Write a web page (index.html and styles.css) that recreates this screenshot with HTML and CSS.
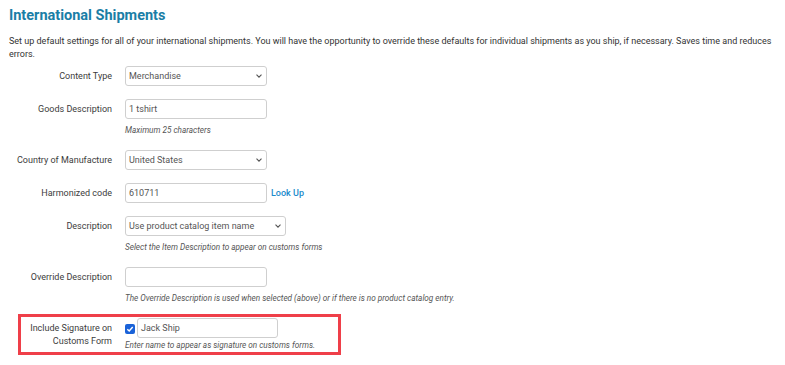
FILE: index.html
```html
<!DOCTYPE html>
<html lang="en">
<head>
<meta charset="utf-8">
<title>International Shipments</title>
<link rel="stylesheet" href="styles.css">
</head>
<body>
<div class="page">
  <h1 class="title">International Shipments</h1>
  <p class="intro">Set up default settings for all of your international shipments. You will have the opportunity to override these defaults for individual shipments as you ship, if necessary. Saves time and reduces errors.</p>

  <div class="form-row">
    <label class="label">Content Type</label>
    <div class="control">
      <div class="select w142"><span>Merchandise</span><svg class="chev" width="6" height="4" viewBox="0 0 6 4"><path d="M0.5 0.6 L3 3.1 L5.5 0.6" fill="none" stroke="#555" stroke-width="1.1"/></svg></div>
    </div>
  </div>

  <div class="form-row">
    <label class="label">Goods Description</label>
    <div class="control">
      <div class="input w142">1 tshirt</div>
      <div class="hint">Maximum 25 characters</div>
    </div>
  </div>

  <div class="form-row">
    <label class="label">Country of Manufacture</label>
    <div class="control">
      <div class="select w142"><span>United States</span><svg class="chev" width="6" height="4" viewBox="0 0 6 4"><path d="M0.5 0.6 L3 3.1 L5.5 0.6" fill="none" stroke="#555" stroke-width="1.1"/></svg></div>
    </div>
  </div>

  <div class="form-row">
    <label class="label">Harmonized code</label>
    <div class="control inline">
      <div class="input w142">610711</div>
      <a class="link" href="#">Look Up</a>
    </div>
  </div>

  <div class="form-row">
    <label class="label">Description</label>
    <div class="control">
      <div class="select w161"><span>Use product catalog item name</span><svg class="chev" width="6" height="4" viewBox="0 0 6 4"><path d="M0.5 0.6 L3 3.1 L5.5 0.6" fill="none" stroke="#555" stroke-width="1.1"/></svg></div>
      <div class="hint">Select the Item Description to appear on customs forms</div>
    </div>
  </div>

  <div class="form-row">
    <label class="label">Override Description</label>
    <div class="control">
      <div class="input w142"></div>
      <div class="hint">The Override Description is used when selected (above) or if there is no product catalog entry.</div>
    </div>
  </div>

  <div class="form-row highlight">
    <label class="label">Include Signature on Customs Form</label>
    <div class="control">
      <div class="inline">
        <span class="checkbox"><svg width="8" height="8" viewBox="0 0 8 8"><path d="M1.3 4.2 L3.2 6 L6.7 2" fill="none" stroke="#fff" stroke-width="1.4"/></svg></span>
        <div class="input w141">Jack Ship</div>
      </div>
      <div class="hint tight">Enter name to appear as signature on customs forms.</div>
    </div>
  </div>
</div>
</body>
</html>
```

FILE: styles.css
```css
html, body {
  margin: 0;
  padding: 0;
  background: #fff;
}

body {
  font-family: Roboto, "Liberation Sans", Arial, sans-serif;
  color: #333;
}

.page {
  padding: 0 6px 0 9px;
}

.title {
  margin: 7px 0 0;
  font-size: 14.5px;
  line-height: 17px;
  font-weight: 700;
  color: #1a7ea6;
}

.intro {
  margin: 11px 0 5px;
  font-size: 9px;
  line-height: 13px;
  color: #333;
}

.form-row {
  display: grid;
  grid-template-columns: 103px 1fr;
  column-gap: 13px;
  margin-bottom: 13px;
}

.label {
  text-align: right;
  font-size: 9px;
  line-height: 13px;
  padding-top: 3.5px;
  color: #3c3c3c;
}

.control {
  min-width: 0;
}

.inline {
  display: flex;
  align-items: center;
}

.input,
.select {
  box-sizing: border-box;
  height: 20px;
  border: 1px solid #cfcfcf;
  border-radius: 3px;
  background: #fff;
  padding: 0 3px;
  font-size: 9px;
  line-height: 18px;
  color: #555;
  white-space: nowrap;
}

.select {
  display: flex;
  align-items: center;
  justify-content: space-between;
  padding-right: 4px;
}

.chev {
  display: block;
  flex: none;
}

.w142 { width: 142px; }
.w141 { width: 141px; }
.w161 { width: 161px; }

.link {
  margin-left: 4px;
  font-size: 9px;
  font-weight: 500;
  color: #1b8bcb;
  text-decoration: none;
}

.hint {
  margin-top: 5px;
  font-size: 8.2px;
  line-height: 13px;
  font-style: italic;
  color: #555;
  white-space: nowrap;
}

.hint.tight {
  margin-top: 1px;
}

.highlight {
  box-sizing: border-box;
  width: 323px;
  margin: -4px 0 0 9px;
  padding: 1px 0 0;
  border: 3px solid #ef3f49;
  grid-template-columns: 91px 1fr;
}

.checkbox {
  box-sizing: border-box;
  width: 10px;
  height: 10px;
  margin-right: 2px;
  margin-top: 2px;
  border-radius: 2px;
  background: #1a62d8;
  display: flex;
  align-items: center;
  justify-content: center;
  flex: none;
}

.checkbox svg {
  display: block;
}
```
